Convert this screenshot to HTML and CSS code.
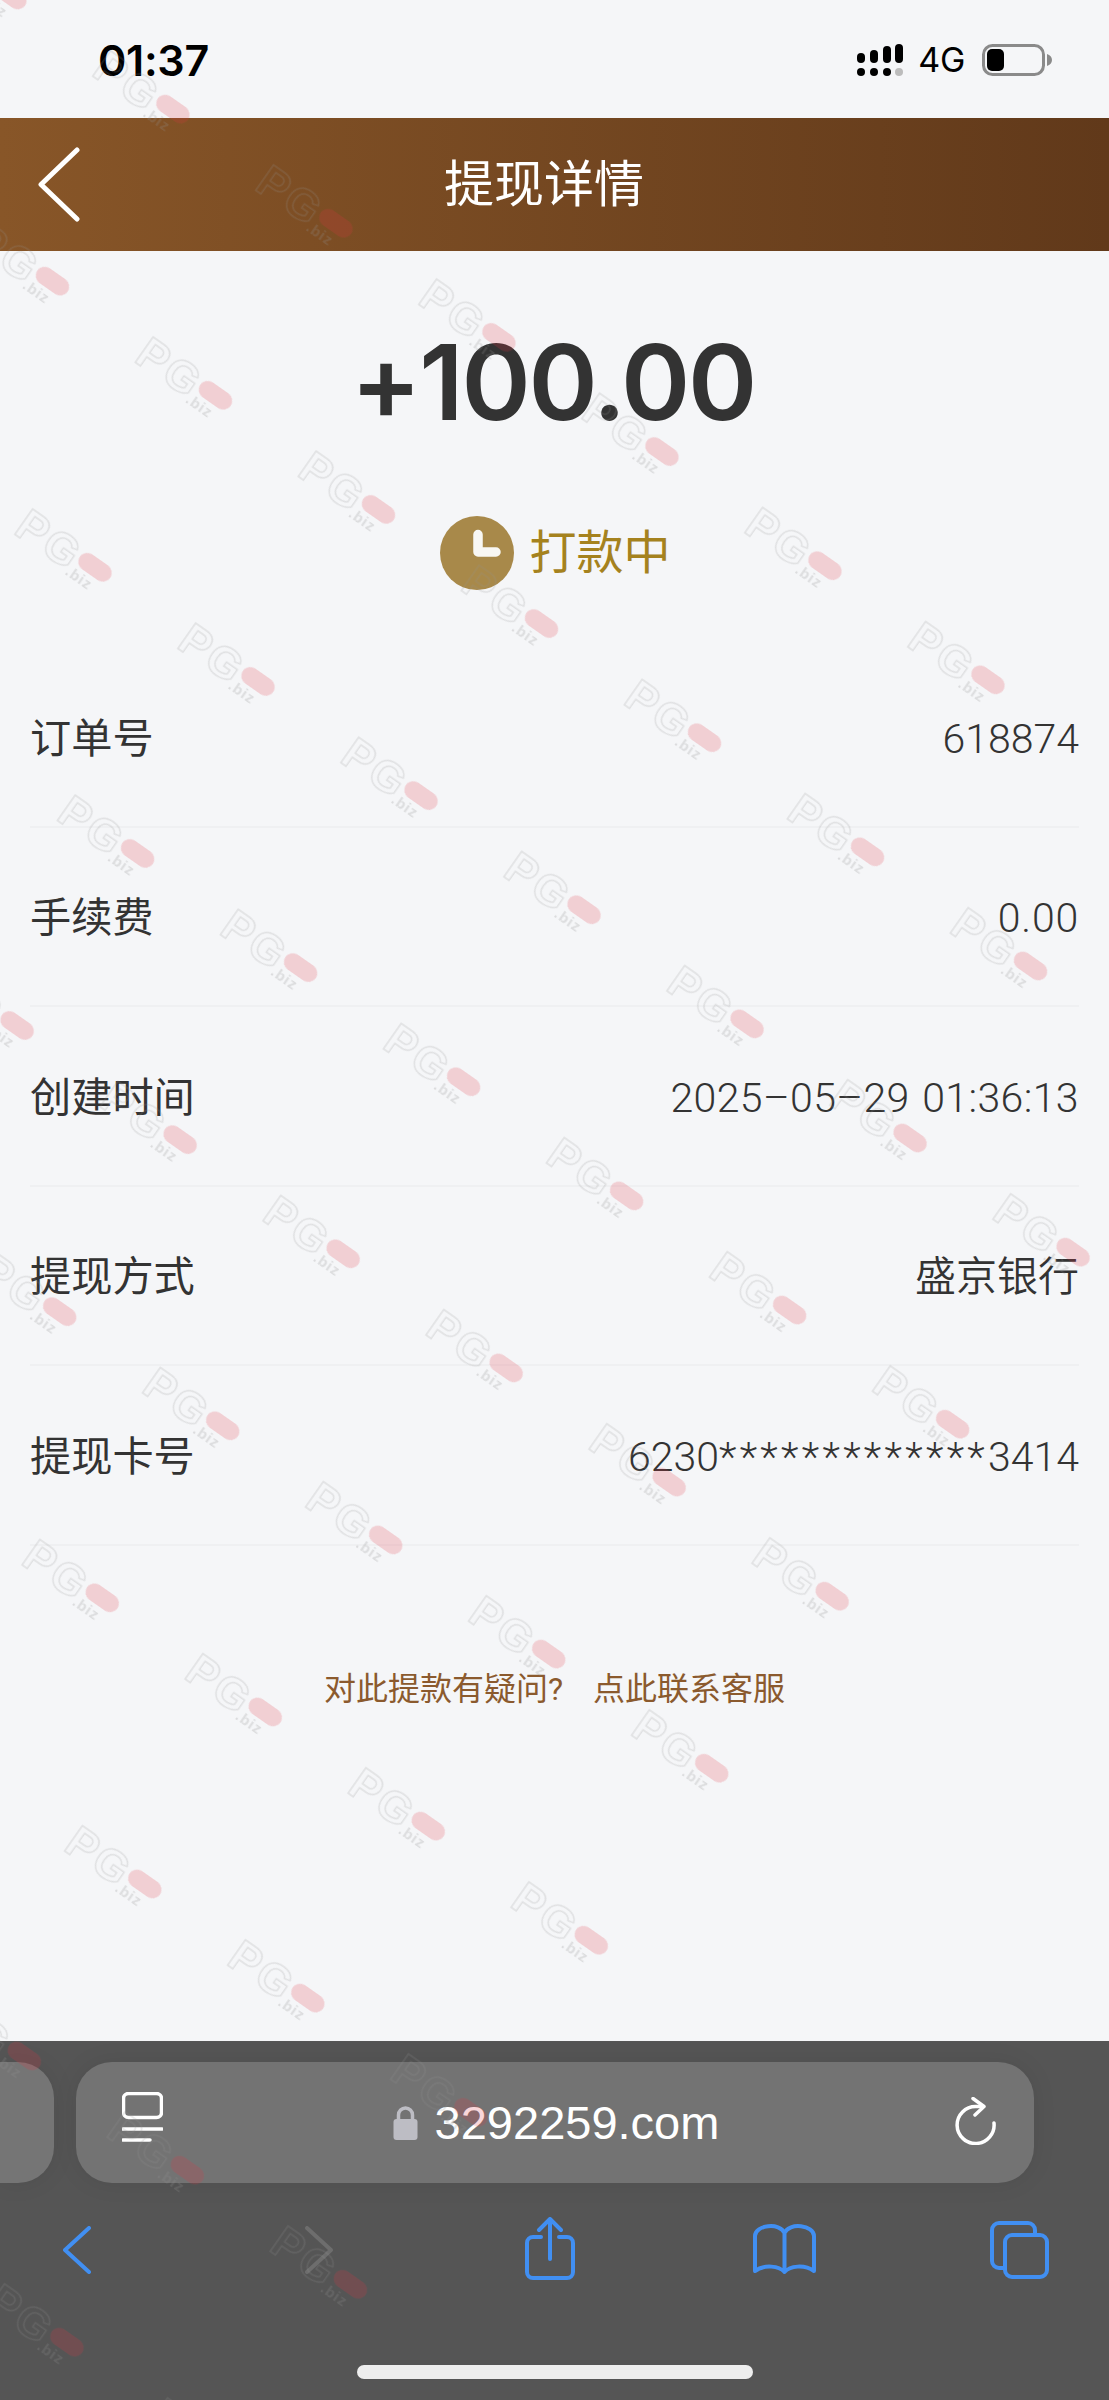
FILE: index.html
```html
<!DOCTYPE html>
<html lang="zh-CN">
<head>
<meta charset="utf-8">
<title>提现详情</title>
<link rel="stylesheet" href="styles.css">
</head>
<body>
<div class="phone">
  <header class="status">
    <span class="time">01:37</span>
    <div class="status-right">
      <svg class="signal" width="46" height="32" viewBox="0 0 46 32">
        <rect x="0" y="9" width="8" height="10" rx="4"/>
        <rect x="13" y="6" width="8" height="13" rx="4"/>
        <rect x="26" y="2" width="8" height="17" rx="4"/>
        <rect x="38" y="0" width="8" height="19" rx="4"/>
        <circle cx="4" cy="28" r="4"/>
        <circle cx="17" cy="28" r="4"/>
        <circle cx="30" cy="28" r="4"/>
        <circle class="signal-off" cx="42" cy="28" r="4"/>
      </svg>
      <span class="net">4G</span>
      <svg class="battery" width="70" height="32" viewBox="0 0 70 32">
        <rect class="battery-shell" x="1.5" y="1.5" width="60" height="29" rx="9"/>
        <rect x="5" y="5" width="17" height="22" rx="5"/>
        <path class="battery-nub" d="M65 10 C68 11 70 13 70 16 C70 19 68 21 65 22 Z"/>
      </svg>
    </div>
  </header>

  <nav class="navbar">
    <svg class="nav-back" width="42" height="76" viewBox="0 0 42 76">
      <polyline points="39,3 3,37.5 39,72"/>
    </svg>
    <h1 class="nav-title">提现详情</h1>
  </nav>

  <main class="detail">
    <div class="amount">+100.00</div>
    <div class="state">
      <svg class="clock" width="74" height="74" viewBox="0 0 74 74">
        <circle class="clock-face" cx="37" cy="37" r="37"/>
        <path class="clock-hand" d="M38 18.5 V36 H56"/>
      </svg>
      <span class="state-text">打款中</span>
    </div>

    <ul class="rows">
      <li class="row"><span>订单号</span><span class="value">618874</span></li>
      <li class="row"><span>手续费</span><span class="value value-fee">0.00</span></li>
      <li class="row"><span>创建时间</span><span class="value value-date">2025–05–29 01:36:13</span></li>
      <li class="row"><span>提现方式</span><span class="value">盛京银行</span></li>
      <li class="row"><span>提现卡号</span><span class="value">6230<span class="mask">*************</span>3414</span></li>
    </ul>

    <p class="help">对此提款有疑问?<span class="help-link">点此联系客服</span></p>
  </main>

  <footer class="toolbar">
    <div class="address-row">
      <div class="tab-stub"></div>
      <div class="address">
        <svg class="reader" width="41" height="50" viewBox="0 0 41 50">
          <rect x="1.5" y="1.5" width="38" height="24" rx="5"/>
          <path d="M1 37 H40 M1 48 H28"/>
        </svg>
        <div class="url">
          <svg class="lock" width="25" height="35" viewBox="0 0 25 35">
            <path class="lock-arc" d="M5.5 15 V10 a7 7 0 0 1 14 0 V15"/>
            <rect x="0.5" y="14" width="24" height="21" rx="3"/>
          </svg>
          <span class="url-text">3292259.com</span>
        </div>
        <svg class="reload" width="41" height="48" viewBox="0 0 41 48">
          <path d="M39 26 A18.5 18.5 0 1 1 21 9.5 H28"/>
          <path d="M18 1.500 L29 9.500 L20 18"/>
        </svg>
      </div>
    </div>

    <div class="actions">
      <svg class="act act-back" width="28" height="48" viewBox="0 0 28 48">
        <polyline points="26,2 2,24 26,46"/>
      </svg>
      <svg class="act act-forward" width="28" height="48" viewBox="0 0 28 48">
        <polyline points="2,2 26,24 2,46"/>
      </svg>
      <svg class="act act-share" width="50" height="63" viewBox="0 0 50 63">
        <path d="M16 20 H8 a6 6 0 0 0 -6 6 V55 a6 6 0 0 0 6 6 H42 a6 6 0 0 0 6 -6 V26 a6 6 0 0 0 -6 -6 H34"/>
        <path d="M25 42 V3 M14 13 L25 2 L36 13"/>
      </svg>
      <svg class="act act-book" width="63" height="52" viewBox="0 0 63 52">
        <path d="M31.500 49 C26 43 12 41 2 48 V13 C2 2 27 -1 31.500 10 C36 -1 61 2 61 13 V48 C51 41 37 43 31.500 49 Z M31.500 10 V49"/>
      </svg>
      <svg class="act act-tabs" width="59" height="58" viewBox="0 0 59 58">
        <path d="M14 47 H9 a7 7 0 0 1 -7 -7 V9 a7 7 0 0 1 7 -7 H38 a7 7 0 0 1 7 7 V14"/>
        <rect x="15" y="14" width="42" height="42" rx="7"/>
      </svg>
    </div>

    <div class="home-bar"></div>
  </footer>

  <svg class="watermark" width="1109" height="2400" aria-hidden="true">
    <defs>
      <pattern id="pg" width="199" height="210" patternUnits="userSpaceOnUse">
        <text class="wm-pg" x="33" y="59">PG</text>
        <rect class="wm-pill" x="102" y="31" width="37" height="18" rx="9"/>
        <text class="wm-biz" x="99" y="63">.biz</text>
      </pattern>
    </defs>
    <g transform="translate(139.700 293.400) rotate(35)">
      <polygon fill="url(#pg)" points="-3980,-210 939,-210 1393,269 1393,3000 -3980,3000"/>
    </g>
  </svg>
</div>
</body>
</html>
```

FILE: styles.css
```css
* { box-sizing: border-box; }

html, body {
  margin: 0;
  padding: 0;
  background: #f5f6f8;
}

.phone {
  position: relative;
  width: 1109px;
  height: 2400px;
  overflow: hidden;
  display: flex;
  flex-direction: column;
  background: #f5f6f8;
  color: #333;
  font-family: Roboto, "Noto Sans CJK SC", sans-serif;
}

/* status bar */
.status {
  height: 118px;
  flex: none;
  display: flex;
  justify-content: space-between;
  align-items: flex-start;
  padding: 36px 57px 0 98px;
}

.time {
  font-family: Inter, sans-serif;
  font-weight: 600;
  font-size: 43px;
  line-height: 48px;
  letter-spacing: -.3px;
  color: #000;
}

.status-right {
  display: flex;
  align-items: center;
  padding-top: 8px;
}

.signal { fill: #000; }
.signal-off { fill: #bcbcbc; }

.net {
  margin-left: 15px;
  font-family: Inter, sans-serif;
  font-size: 34px;
  line-height: 32px;
  color: #000;
  letter-spacing: -.3px;
}

.battery { margin-left: 17px; fill: #000; }
.battery-shell { fill: none; stroke: #8a8a8a; stroke-width: 3; }
.battery-nub { fill: #8a8a8a; }

/* navbar */
.navbar {
  height: 133px;
  flex: none;
  display: flex;
  align-items: center;
  padding-left: 38px;
  background: linear-gradient(90deg, #885628 0%, #61391a 100%);
}

.nav-back {
  flex: none;
  fill: none;
  stroke: #fff;
  stroke-width: 5;
  stroke-linecap: round;
  stroke-linejoin: round;
}

.nav-title {
  margin: 0 0 0 364px;
  font-size: 50px;
  line-height: 60px;
  font-weight: 400;
  color: #fff;
}

/* detail */
.detail {
  flex: 1;
  display: flex;
  flex-direction: column;
}

.amount {
  margin-top: 71px;
  padding-right: 3px;
  text-align: center;
  font-size: 105px;
  line-height: 120px;
  font-weight: 600;
  color: #333;
  font-family: Inter, sans-serif;
  letter-spacing: -2.2px;
}

.state {
  margin-top: 74px;
  display: flex;
  justify-content: center;
  align-items: center;
  gap: 16px;
  height: 74px;
  padding-left: 1px;
}

.clock { flex: none; }
.clock-face { fill: #a8894a; }
.clock-hand {
  fill: none;
  stroke: #f8f7f3;
  stroke-width: 9.5;
  stroke-linecap: round;
  stroke-linejoin: round;
}

.state-text {
  font-size: 47px;
  line-height: 60px;
  color: #a5821e;
}

.rows {
  list-style: none;
  margin: 58px 30px 0;
  padding: 0;
}

.row {
  height: 179.5px;
  display: flex;
  justify-content: space-between;
  align-items: center;
  padding-top: 4px;
  border-bottom: 2px solid #eff0f2;
  font-size: 41.2px;
  line-height: 50px;
  color: #333;
}

.value { font-size: 41px; font-weight: 350; }
.value-date { letter-spacing: .4px; word-spacing: 2px; }
.value-fee { letter-spacing: .8px; }
.mask { letter-spacing: 3.3px; }

.help {
  margin: 121px 0 0;
  text-align: center;
  font-size: 32px;
  line-height: 44px;
  color: #8b5a2e;
}

.help-link { margin-left: 30px; }

/* safari toolbar */
.toolbar {
  flex: none;
  height: 359px;
  display: flex;
  flex-direction: column;
  background: #555;
  color: #fff;
}

.address-row {
  display: flex;
  gap: 22.500px;
  margin-top: 21px;
  height: 121px;
  flex: none;
}

.tab-stub {
  width: 53.500px;
  background: #757575;
  border-radius: 0 36px 36px 0;
  box-shadow: 0 0 24px rgba(0,0,0,.08);
}

.address {
  width: 958px;
  display: flex;
  align-items: center;
  justify-content: space-between;
  padding: 0 38px 0 46px;
  background: #737373;
  border-radius: 36px;
  box-shadow: 0 0 24px rgba(0,0,0,.08);
}

.reader {
  flex: none;
  fill: none;
  stroke: #fff;
  stroke-width: 3.500;
  stroke-linecap: round;
  margin-top: -12px;
}

.url {
  display: flex;
  align-items: center;
  gap: 17px;
  margin-right: 6px;
}

.lock { fill: #bdbdc4; }
.lock-arc { fill: none; stroke: #bdbdc4; stroke-width: 3.500; }

.url-text {
  font-family: "Liberation Sans", Arial, sans-serif;
  font-size: 47px;
  line-height: 56px;
  color: #fff;
}

.reload {
  flex: none;
  fill: none;
  stroke: #fff;
  stroke-width: 3.500;
  stroke-linecap: round;
  stroke-linejoin: round;
  margin-top: -4px;
}

.actions {
  height: 134px;
  flex: none;
  display: flex;
  align-items: center;
  padding-left: 63px;
}

.act {
  flex: none;
  fill: none;
  stroke: #418ff2;
  stroke-width: 4;
  stroke-linecap: round;
  stroke-linejoin: round;
}

.act-forward { margin-left: 214px; stroke: #6d6d6d; }
.act-share { margin-left: 192px; margin-top: -3px; }
.act-book { margin-left: 178px; margin-top: -2px; }
.act-tabs { margin-left: 174px; }

.home-bar {
  width: 396px;
  height: 14px;
  flex: none;
  align-self: center;
  margin-top: 48px;
  border-radius: 7px;
  background: #eee;
}

/* watermark overlay */
.watermark {
  position: absolute;
  left: 0;
  top: 0;
  pointer-events: none;
}

.wm-pg {
  font-family: "Liberation Sans", Arial, sans-serif;
  font-weight: 700;
  font-size: 44px;
  letter-spacing: 3px;
  fill: none;
  stroke: #909090;
  stroke-width: 1.500;
  stroke-opacity: .22;
}

.wm-pill { fill: #e2303f; fill-opacity: .2; }

.wm-biz {
  font-family: "Liberation Sans", Arial, sans-serif;
  font-weight: 700;
  font-size: 15px;
  letter-spacing: 1px;
  fill: #909090;
  fill-opacity: .25;
}
```
